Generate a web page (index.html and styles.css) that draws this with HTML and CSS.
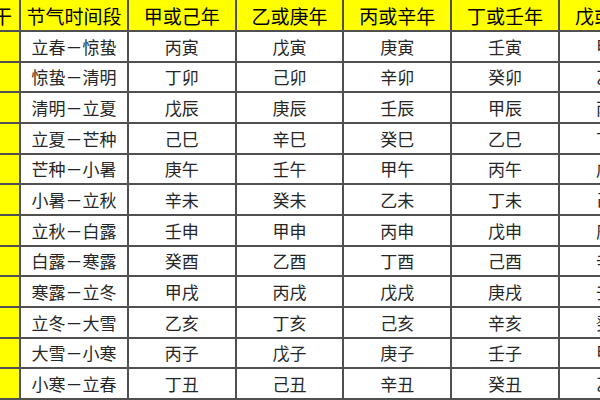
FILE: index.html
```html
<!DOCTYPE html>
<html lang="zh">
<head>
<meta charset="utf-8">
<title>年上起月表</title>
<link rel="stylesheet" href="styles.css">
</head>
<body>
<div class="sheet">
  <div class="cell head side">年干</div>
  <div class="cell head">节气时间段</div>
  <div class="cell head">甲或己年</div>
  <div class="cell head">乙或庚年</div>
  <div class="cell head">丙或辛年</div>
  <div class="cell head">丁或壬年</div>
  <div class="cell head">戊或癸年</div>

  <div class="cell side"></div><div class="cell">立春－惊蛰</div><div class="cell">丙寅</div><div class="cell">戊寅</div><div class="cell">庚寅</div><div class="cell">壬寅</div><div class="cell">甲寅</div>
  <div class="cell side"></div><div class="cell">惊蛰－清明</div><div class="cell">丁卯</div><div class="cell">己卯</div><div class="cell">辛卯</div><div class="cell">癸卯</div><div class="cell">乙卯</div>
  <div class="cell side"></div><div class="cell">清明－立夏</div><div class="cell">戊辰</div><div class="cell">庚辰</div><div class="cell">壬辰</div><div class="cell">甲辰</div><div class="cell">丙辰</div>
  <div class="cell side"></div><div class="cell">立夏－芒种</div><div class="cell">己巳</div><div class="cell">辛巳</div><div class="cell">癸巳</div><div class="cell">乙巳</div><div class="cell">丁巳</div>
  <div class="cell side"></div><div class="cell">芒种－小暑</div><div class="cell">庚午</div><div class="cell">壬午</div><div class="cell">甲午</div><div class="cell">丙午</div><div class="cell">戊午</div>
  <div class="cell side"></div><div class="cell">小暑－立秋</div><div class="cell">辛未</div><div class="cell">癸未</div><div class="cell">乙未</div><div class="cell">丁未</div><div class="cell">己未</div>
  <div class="cell side"></div><div class="cell">立秋－白露</div><div class="cell">壬申</div><div class="cell">甲申</div><div class="cell">丙申</div><div class="cell">戊申</div><div class="cell">庚申</div>
  <div class="cell side"></div><div class="cell">白露－寒露</div><div class="cell">癸酉</div><div class="cell">乙酉</div><div class="cell">丁酉</div><div class="cell">己酉</div><div class="cell">辛酉</div>
  <div class="cell side"></div><div class="cell">寒露－立冬</div><div class="cell">甲戌</div><div class="cell">丙戌</div><div class="cell">戊戌</div><div class="cell">庚戌</div><div class="cell">壬戌</div>
  <div class="cell side"></div><div class="cell">立冬－大雪</div><div class="cell">乙亥</div><div class="cell">丁亥</div><div class="cell">己亥</div><div class="cell">辛亥</div><div class="cell">癸亥</div>
  <div class="cell side"></div><div class="cell">大雪－小寒</div><div class="cell">丙子</div><div class="cell">戊子</div><div class="cell">庚子</div><div class="cell">壬子</div><div class="cell">甲子</div>
  <div class="cell side"></div><div class="cell">小寒－立春</div><div class="cell">丁丑</div><div class="cell">己丑</div><div class="cell">辛丑</div><div class="cell">癸丑</div><div class="cell">乙丑</div>
</div>
</body>
</html>
```
FILE: styles.css
```css
html, body {
  margin: 0;
  padding: 0;
  background: #ffffff;
  overflow: hidden;
}

body {
  width: 600px;
  height: 400px;
  font-family: "Noto Sans CJK SC", "Noto Sans", sans-serif;
}

.sheet {
  display: grid;
  width: max-content;
  margin-left: -33px;
  grid-template-columns: 52px repeat(6, 105.8px);
  grid-template-rows: 30px repeat(12, 28.67px);
  gap: 2px;
  padding-bottom: 2px;
  background: #505050;
}

.cell {
  display: flex;
  align-items: center;
  justify-content: center;
  background: #ffffff;
  color: #262626;
  font-size: 17px;
  line-height: 1;
  white-space: nowrap;
}

.head {
  background: #ffff00;
  color: #000000;
  font-size: 19px;
}

.side {
  background: #ffff00;
}
```
